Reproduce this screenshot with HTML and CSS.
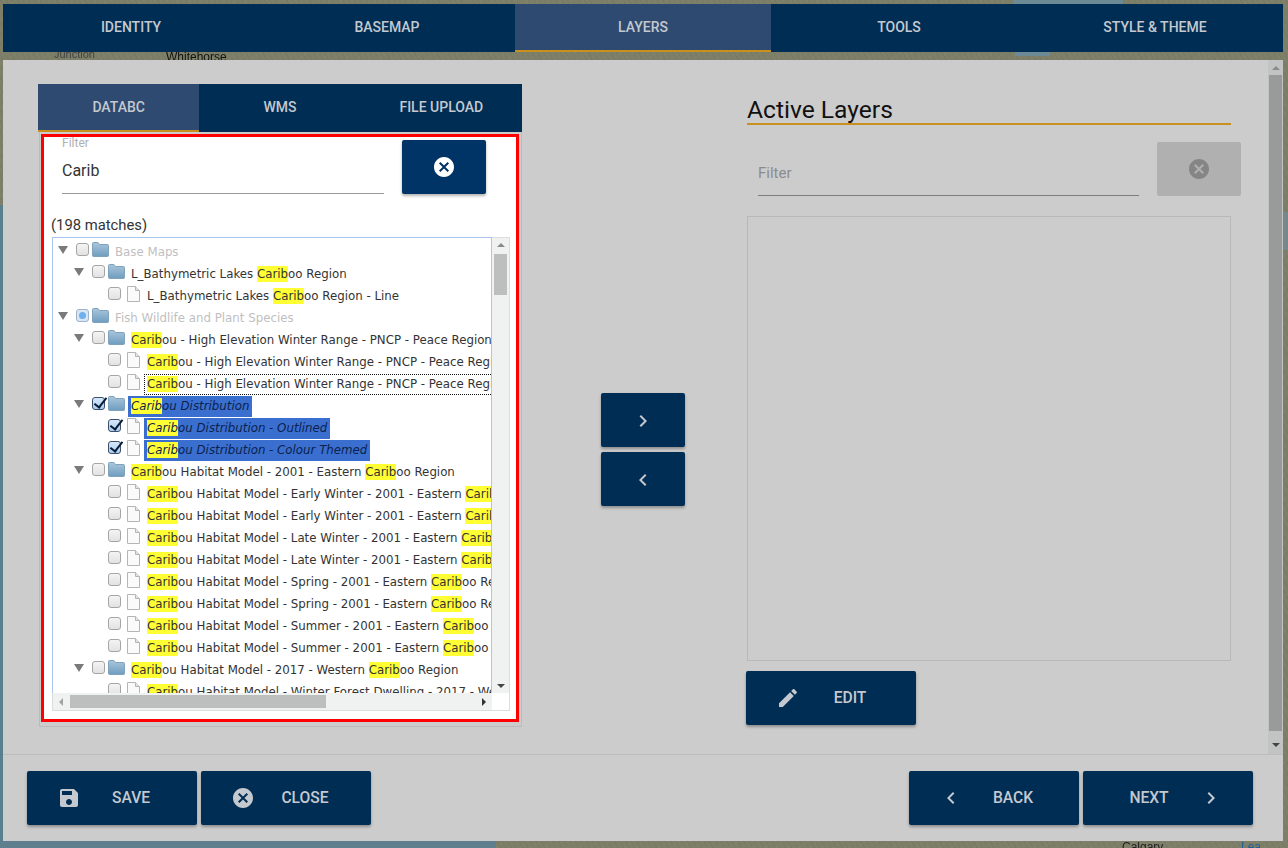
FILE: index.html
```html
<!DOCTYPE html>
<html lang="en">

<head>
  <meta charset="UTF-8">
  <title>Layers</title>
  <link rel="stylesheet" href="styles.css">
</head>

<body>

  <svg class="defs" width="0" height="0">
    <defs>
      <linearGradient id="folderFill" x1="0" y1="0" x2="0" y2="1">
        <stop offset="0" stop-color="#a9c6dc" />
        <stop offset="1" stop-color="#6f9dbf" />
      </linearGradient>
      <symbol id="i-cancel" viewBox="0 0 24 24">
        <path d="M12 2C6.47 2 2 6.47 2 12s4.47 10 10 10 10-4.47 10-10S17.53 2 12 2zm5 13.59L15.59 17 12 13.41 8.41 17 7 15.59 10.59 12 7 8.41 8.41 7 12 10.59 15.59 7 17 8.41 13.41 12 17 15.59z" />
      </symbol>
      <symbol id="i-save" viewBox="0 0 24 24">
        <path d="M17 3H5c-1.11 0-2 .9-2 2v14c0 1.1.89 2 2 2h14c1.1 0 2-.9 2-2V7l-4-4zm-5 16c-1.66 0-3-1.34-3-3s1.34-3 3-3 3 1.34 3 3-1.34 3-3 3zm3-10H5V5h10v4z" />
      </symbol>
      <symbol id="i-edit" viewBox="0 0 24 24">
        <path d="M3 17.25V21h3.75L17.81 9.94l-3.75-3.75L3 17.25zM20.71 7.04c.39-.39.39-1.02 0-1.41l-2.34-2.34c-.39-.39-1.02-.39-1.41 0l-1.83 1.83 3.75 3.75 1.83-1.83z" />
      </symbol>
      <symbol id="i-left" viewBox="0 0 24 24">
        <path d="M15.41 7.41L14 6l-6 6 6 6 1.41-1.41L10.83 12z" />
      </symbol>
      <symbol id="i-right" viewBox="0 0 24 24">
        <path d="M10 6L8.59 7.41 13.17 12l-4.58 4.59L10 18l6-6z" />
      </symbol>
      <symbol id="i-folder" viewBox="0 0 17 15">
        <path d="M.5 3V1.5q0-1 1-1h4.5l1.5 2h8q1 0 1 1v10q0 1-1 1h-14q-1 0-1-1z" fill="url(#folderFill)" stroke="#7fa3bd" />
      </symbol>
      <symbol id="i-page" viewBox="0 0 13 16">
        <path d="M.5.5h8l4 4v11H.5z" fill="#fafafa" stroke="#b5b5b5" />
        <path d="M8.5.5v4h4" fill="#e4e4e4" stroke="#b5b5b5" />
      </symbol>
    </defs>
  </svg>

  <div class="map">
    <span class="water lake-top"></span>
    <span class="water lake-under"></span>
    <span class="water water-left"></span>
    <span class="water water-bottom"></span>
    <span class="water water-right"></span>
    <span class="place place-junction">Junction</span>
    <span class="place place-whitehorse">Whitehorse</span>
    <span class="place place-calgary">Calgary</span>
    <span class="place place-lea">Lea</span>
  </div>

  <div class="page">
    <nav class="steps">
      <div class="step">IDENTITY</div>
      <div class="step">BASEMAP</div>
      <div class="step active">LAYERS</div>
      <div class="step">TOOLS</div>
      <div class="step">STYLE &amp; THEME</div>
    </nav>

    <div class="modal">
      <div class="modal-body">
        <div class="modal-content">

          <section class="col-left">
            <div class="tabs">
              <div class="tab active">DATABC</div>
              <div class="tab">WMS</div>
              <div class="tab">FILE UPLOAD</div>
            </div>

            <div class="tab-frame">
              <div class="tab-panel">
                <div class="filter-row">
                  <div class="field">
                    <span class="field-label">Filter</span>
                    <span class="field-value">Carib</span>
                  </div>
                  <button class="btn btn-clear"><svg class="icon"><use href="#i-cancel" /></svg></button>
                </div>

                <div class="matches">(198 matches)</div>

                <div class="tree">
                  <div class="tree-view">
                    <div class="node lv0"><i class="tri"></i><i class="cb"></i><svg class="folder"><use href="#i-folder" /></svg><span class="txt muted">Base Maps</span></div>
                    <div class="node lv1"><i class="tri"></i><i class="cb"></i><svg class="folder"><use href="#i-folder" /></svg><span class="txt">L_Bathymetric Lakes <mark>Carib</mark>oo Region</span></div>
                    <div class="node lv2"><i class="tri none"></i><i class="cb"></i><svg class="doc"><use href="#i-page" /></svg><span class="txt">L_Bathymetric Lakes <mark>Carib</mark>oo Region - Line</span></div>
                    <div class="node lv0"><i class="tri"></i><i class="cb part"></i><svg class="folder"><use href="#i-folder" /></svg><span class="txt muted">Fish Wildlife and Plant Species</span></div>
                    <div class="node lv1"><i class="tri"></i><i class="cb"></i><svg class="folder"><use href="#i-folder" /></svg><span class="txt"><mark>Carib</mark>ou - High Elevation Winter Range - PNCP - Peace Region</span></div>
                    <div class="node lv2"><i class="tri none"></i><i class="cb"></i><svg class="doc"><use href="#i-page" /></svg><span class="txt"><mark>Carib</mark>ou - High Elevation Winter Range - PNCP - Peace Region - Line</span></div>
                    <div class="node lv2"><i class="tri none"></i><i class="cb"></i><svg class="doc"><use href="#i-page" /></svg><span class="txt focus"><mark>Carib</mark>ou - High Elevation Winter Range - PNCP - Peace Region - Polygon</span></div>
                    <div class="node lv1"><i class="tri"></i><i class="cb on"></i><svg class="folder"><use href="#i-folder" /></svg><span class="txt sel"><mark>Carib</mark>ou Distribution</span></div>
                    <div class="node lv2"><i class="tri none"></i><i class="cb on"></i><svg class="doc"><use href="#i-page" /></svg><span class="txt sel"><mark>Carib</mark>ou Distribution - Outlined</span></div>
                    <div class="node lv2"><i class="tri none"></i><i class="cb on"></i><svg class="doc"><use href="#i-page" /></svg><span class="txt sel"><mark>Carib</mark>ou Distribution - Colour Themed</span></div>
                    <div class="node lv1"><i class="tri"></i><i class="cb"></i><svg class="folder"><use href="#i-folder" /></svg><span class="txt"><mark>Carib</mark>ou Habitat Model - 2001 - Eastern <mark>Carib</mark>oo Region</span></div>
                    <div class="node lv2"><i class="tri none"></i><i class="cb"></i><svg class="doc"><use href="#i-page" /></svg><span class="txt"><mark>Carib</mark>ou Habitat Model - Early Winter - 2001 - Eastern <mark>Carib</mark>oo Region</span></div>
                    <div class="node lv2"><i class="tri none"></i><i class="cb"></i><svg class="doc"><use href="#i-page" /></svg><span class="txt"><mark>Carib</mark>ou Habitat Model - Early Winter - 2001 - Eastern <mark>Carib</mark>oo Region</span></div>
                    <div class="node lv2"><i class="tri none"></i><i class="cb"></i><svg class="doc"><use href="#i-page" /></svg><span class="txt"><mark>Carib</mark>ou Habitat Model - Late Winter - 2001 - Eastern <mark>Carib</mark>oo Region</span></div>
                    <div class="node lv2"><i class="tri none"></i><i class="cb"></i><svg class="doc"><use href="#i-page" /></svg><span class="txt"><mark>Carib</mark>ou Habitat Model - Late Winter - 2001 - Eastern <mark>Carib</mark>oo Region</span></div>
                    <div class="node lv2"><i class="tri none"></i><i class="cb"></i><svg class="doc"><use href="#i-page" /></svg><span class="txt"><mark>Carib</mark>ou Habitat Model - Spring - 2001 - Eastern <mark>Carib</mark>oo Region</span></div>
                    <div class="node lv2"><i class="tri none"></i><i class="cb"></i><svg class="doc"><use href="#i-page" /></svg><span class="txt"><mark>Carib</mark>ou Habitat Model - Spring - 2001 - Eastern <mark>Carib</mark>oo Region</span></div>
                    <div class="node lv2"><i class="tri none"></i><i class="cb"></i><svg class="doc"><use href="#i-page" /></svg><span class="txt"><mark>Carib</mark>ou Habitat Model - Summer - 2001 - Eastern <mark>Carib</mark>oo Region</span></div>
                    <div class="node lv2"><i class="tri none"></i><i class="cb"></i><svg class="doc"><use href="#i-page" /></svg><span class="txt"><mark>Carib</mark>ou Habitat Model - Summer - 2001 - Eastern <mark>Carib</mark>oo Region</span></div>
                    <div class="node lv1"><i class="tri"></i><i class="cb"></i><svg class="folder"><use href="#i-folder" /></svg><span class="txt"><mark>Carib</mark>ou Habitat Model - 2017 - Western <mark>Carib</mark>oo Region</span></div>
                    <div class="node lv2"><i class="tri none"></i><i class="cb"></i><svg class="doc"><use href="#i-page" /></svg><span class="txt"><mark>Carib</mark>ou Habitat Model - Winter Forest Dwelling - 2017 - Western <mark>Carib</mark>oo Region</span></div>
                  </div>
                  <div class="vbar">
                    <i class="arrow up"></i>
                    <div class="vtrack"><div class="vthumb"></div></div>
                    <i class="arrow down"></i>
                  </div>
                  <div class="hbar">
                    <i class="arrow left"></i>
                    <div class="htrack"><div class="hthumb"></div></div>
                    <i class="arrow right"></i>
                  </div>
                  <div class="corner"></div>
                </div>
              </div>
            </div>
          </section>

          <section class="col-mid">
            <button class="btn btn-move"><svg class="icon"><use href="#i-right" /></svg></button>
            <button class="btn btn-move"><svg class="icon"><use href="#i-left" /></svg></button>
          </section>

          <section class="col-right">
            <h2 class="title">Active Layers</h2>
            <div class="active-filter">
              <div class="field-empty">Filter</div>
              <button class="btn btn-disabled"><svg class="icon"><use href="#i-cancel" /></svg></button>
            </div>
            <div class="active-list"></div>
            <button class="btn btn-wide"><svg class="icon"><use href="#i-edit" /></svg><span class="btn-text">EDIT</span></button>
          </section>

        </div>

        <div class="modal-scroll">
          <i class="arrow up"></i>
          <div class="modal-track"><div class="modal-thumb"></div></div>
          <i class="arrow down"></i>
        </div>
      </div>

      <footer class="modal-foot">
        <div class="foot-group">
          <button class="btn btn-wide"><svg class="icon"><use href="#i-save" /></svg><span class="btn-text">SAVE</span></button>
          <button class="btn btn-wide"><svg class="icon"><use href="#i-cancel" /></svg><span class="btn-text">CLOSE</span></button>
        </div>
        <div class="foot-group">
          <button class="btn btn-wide"><svg class="icon"><use href="#i-left" /></svg><span class="btn-text">BACK</span></button>
          <button class="btn btn-wide btn-rev"><span class="btn-text">NEXT</span><svg class="icon"><use href="#i-right" /></svg></button>
        </div>
      </footer>
    </div>
  </div>

</body>

</html>
```

FILE: styles.css
```css
* {
  box-sizing: border-box;
}

html,
body {
  margin: 0;
  height: 100%;
  overflow: hidden;
}

body {
  font-family: Roboto, "Liberation Sans", sans-serif;
  background-color: #7d7f68;
}

.defs {
  position: absolute;
}

/* map behind the dialog */
.map {
  position: fixed;
  top: 0;
  left: 0;
  right: 0;
  bottom: 0;
  background-color: #7d7f68;
  background-image:
    repeating-linear-gradient(63deg, rgba(60, 55, 35, 0.07) 0 1px, transparent 1px 5px),
    repeating-linear-gradient(-37deg, rgba(170, 170, 140, 0.07) 0 1px, transparent 1px 7px);
}

.water {
  position: absolute;
  background-color: #6c8a96;
}

.lake-top {
  left: 1013px;
  top: 0;
  width: 110px;
  height: 4px;
}

.lake-under {
  left: 1015px;
  top: 52px;
  width: 35px;
  height: 4px;
}

.water-left {
  left: 0;
  top: 205px;
  width: 3px;
  height: 643px;
  background-color: #5a7f8c;
}

.water-bottom {
  left: 0;
  top: 841px;
  width: 496px;
  height: 7px;
  background-color: #5f7f8f;
}

.water-right {
  left: 1283px;
  top: 212px;
  width: 5px;
  height: 38px;
  background-color: #75898c;
}

.place {
  position: absolute;
  font-family: "Liberation Sans", sans-serif;
  font-size: 11px;
  color: #222;
}

.place-junction {
  left: 54px;
  top: 48px;
  color: #444;
}

.place-whitehorse {
  left: 166px;
  top: 50px;
  font-size: 12px;
  color: #111;
}

.place-calgary {
  left: 1122px;
  top: 840px;
  font-size: 12px;
}

.place-lea {
  left: 1241px;
  top: 840px;
  font-size: 12px;
  color: #1d5f9c;
}

.page {
  position: relative;
  display: flex;
  flex-direction: column;
  gap: 8px;
  height: 848px;
  padding: 4px 5px 7px 3px;
}

/* top steps */
.steps {
  display: flex;
  height: 48px;
  background-color: #002d54;
}

.step {
  flex: 1;
  display: flex;
  align-items: center;
  justify-content: center;
  padding-bottom: 2px;
  font-size: 14px;
  font-weight: 500;
  color: #c4c9cf;
}

.step.active,
.tab.active {
  background-color: #2f4a70;
  border-bottom: 2px solid #c8901e;
  padding-bottom: 0;
}

/* dialog */
.modal {
  flex: 1;
  display: flex;
  flex-direction: column;
  background-color: #ccc;
}

.modal-body {
  display: flex;
  height: 695px;
  border-bottom: 1px solid #bdbdbd;
}

.modal-content {
  flex: 1;
  display: flex;
  padding: 24px 0 0 35px;
}

.modal-scroll {
  width: 15px;
  display: flex;
  flex-direction: column;
  align-items: center;
  background-color: #c2c3c3;
}

.modal-track {
  flex: 1;
  width: 13px;
  padding: 1px 0 12px;
}

.modal-thumb {
  height: 100%;
  background-color: #999a9a;
}

.modal-scroll .arrow.up {
  margin: 6px 0 4px;
}

.modal-scroll .arrow.down {
  margin: 0 0 7px;
}

.arrow {
  display: block;
  width: 0;
  height: 0;
  flex-shrink: 0;
  border-style: solid;
  border-color: transparent;
}

.arrow.up {
  border-width: 0 4px 4px;
  border-bottom-color: #8a8a8a;
}

.arrow.down {
  border-width: 4px 4px 0;
  border-top-color: #444;
}

.arrow.left {
  border-width: 4px 4px 4px 0;
  border-right-color: #a3a3a3;
}

.arrow.right {
  border-width: 4px 0 4px 4px;
  border-left-color: #333;
}

/* left column */
.col-left {
  width: 484px;
}

.tabs {
  display: flex;
  height: 48px;
  background-color: #002d54;
}

.tab {
  flex: 1;
  display: flex;
  align-items: center;
  justify-content: center;
  padding-bottom: 2px;
  font-size: 14px;
  font-weight: 500;
  color: #c4c9cf;
}

.tab-frame {
  height: 595px;
  padding: 2px 2px 4px 1px;
  margin-left: 1px;
  border-left: 1px solid #bbb;
  border-right: 1px solid #bbb;
  border-bottom: 1px solid #bbb;
}

.tab-panel {
  height: 100%;
  padding: 3px 6px 0 7px;
  background-color: #fff;
  border: 3px solid #f00;
}

.filter-row {
  display: flex;
  align-items: flex-start;
  gap: 18px;
  height: 57px;
  padding: 0 24px 0 11px;
}

.field {
  width: 322px;
  height: 54px;
  display: flex;
  flex-direction: column;
  border-bottom: 1px solid #9a9a9a;
}

.field-label {
  font-size: 12px;
  line-height: 12px;
  margin-top: -3px;
  color: #b0b0b0;
}

.field-value {
  font-size: 16px;
  line-height: 20px;
  margin-top: 12px;
  color: #333;
}

.matches {
  margin-top: 19px;
  height: 21px;
  font-size: 14.8px;
  line-height: 19px;
  color: #333;
}

/* tree */
.tree {
  display: grid;
  grid-template-columns: 440px 17px;
  grid-template-rows: 456px 17px;
  width: 458px;
  margin-left: 1px;
  border-right: 1px solid #ddd;
  border-bottom: 1px solid #ddd;
}

.tree-view {
  overflow: hidden;
  padding-top: 3px;
  border-top: 1px solid #a8c6ee;
  border-left: 1px solid #a8c6ee;
  border-right: 1px solid #a8c6ee;
  font-family: "DejaVu Sans", Verdana, sans-serif;
  font-size: 11.8px;
  color: #333;
}

.node {
  display: flex;
  align-items: center;
  height: 22px;
  white-space: nowrap;
}

.lv0 {
  padding-left: 5px;
}

.lv1 {
  padding-left: 21px;
}

.lv2 {
  padding-left: 37px;
}

.tri {
  width: 0;
  height: 0;
  margin: 0 8px 4px 0;
  flex-shrink: 0;
  border-style: solid;
  border-width: 8px 5px 0;
  border-color: #7a7a7a transparent transparent;
}

.tri.none {
  border-color: transparent;
}

.cb {
  position: relative;
  display: block;
  width: 13px;
  height: 13px;
  margin-bottom: 5px;
  flex-shrink: 0;
  border: 1px solid #a5a5a5;
  border-radius: 3px;
  background: linear-gradient(#f4f4f4, #e2e2e2);
}

.cb.part {
  background: #d8e6f4;
  border-color: #9db4cc;
}

.cb.part:after {
  content: "";
  position: absolute;
  left: 2px;
  top: 2px;
  width: 7px;
  height: 7px;
  border-radius: 50%;
  background-color: #6fb0ee;
}

.cb.on {
  background: linear-gradient(#d5e8fa, #a9cdf0);
  border-color: #3b4f6b;
}

.cb.on:after {
  content: "";
  position: absolute;
  left: 4px;
  top: -3px;
  width: 5px;
  height: 11px;
  border-right: 2px solid #0a1a33;
  border-bottom: 2px solid #0a1a33;
  transform: rotate(38deg);
}

.folder {
  width: 17px;
  height: 15px;
  margin: 0 0 5px 3px;
  flex-shrink: 0;
}

.doc {
  width: 13px;
  height: 16px;
  margin: 0 1px 5px 6px;
  flex-shrink: 0;
}

.txt {
  display: block;
  height: 21px;
  line-height: 20px;
  margin-left: 3px;
  padding: 0 3px;
}

.muted {
  color: #bfbfbf;
}

.sel {
  background-color: #3a6fd0;
  font-style: italic;
  color: #0b1f4d;
}

.focus {
  outline: 1px dotted #111;
  outline-offset: -1px;
}

mark {
  display: inline-block;
  height: 16px;
  line-height: 16px;
  background-color: #ff3;
  color: inherit;
}

.vbar {
  display: flex;
  flex-direction: column;
  align-items: center;
  background-color: #f0f1f1;
  border-top: 1px solid #ddd;
}

.vbar .arrow.up {
  margin: 5px 0 7px;
}

.vtrack {
  flex: 1;
}

.vthumb {
  width: 13px;
  height: 41px;
  background-color: #bdbfbf;
}

.vbar .arrow.down {
  margin-bottom: 5px;
}

.hbar {
  display: flex;
  align-items: center;
  padding: 0 6px;
  background-color: #f0f1f1;
  border-left: 1px solid #ddd;
}

.htrack {
  flex: 1;
  padding: 0 0 0 7px;
}

.hthumb {
  width: 256px;
  height: 13px;
  background-color: #bdbfbf;
}

.corner {
  background-color: #fff;
}

/* middle */
.col-mid {
  width: 84px;
  margin-left: 79px;
  display: flex;
  flex-direction: column;
  gap: 5px;
  padding-top: 309px;
}

/* right column */
.col-right {
  width: 495px;
  margin-left: 62px;
  padding-top: 10px;
}

.title {
  width: 484px;
  height: 31px;
  margin: 0;
  padding-top: 1px;
  font-size: 24.6px;
  font-weight: 400;
  line-height: 30px;
  color: #111;
  border-bottom: 2px solid #c8901e;
}

.active-filter {
  display: flex;
  align-items: flex-start;
  gap: 18px;
  margin-top: 17px;
  padding-left: 11px;
}

.field-empty {
  width: 381px;
  height: 54px;
  padding-top: 22px;
  font-size: 15px;
  line-height: 19px;
  color: #8c8c8c;
  border-bottom: 1px solid #7d7d7d;
}

.active-list {
  width: 484px;
  height: 445px;
  margin-top: 20px;
  margin-bottom: 10px;
  border: 1px solid #b8b8b8;
}

.col-right .btn-wide {
  margin-left: -1px;
}

/* buttons */
.btn {
  display: flex;
  align-items: center;
  justify-content: center;
  height: 54px;
  padding: 0;
  border: none;
  border-radius: 2px;
  font-family: inherit;
  font-size: 15.6px;
  font-weight: 500;
  color: #c4c9cf;
  background-color: #002d54;
  box-shadow: 0 2px 3px rgba(0, 0, 0, 0.3);
}

.icon {
  width: 24px;
  height: 24px;
  flex-shrink: 0;
  fill: currentColor;
}

.btn-clear {
  width: 84px;
  background-color: #003366;
  color: #fff;
}

.btn-disabled {
  width: 84px;
  background-color: #b0b0b0;
  color: #858585;
  box-shadow: none;
}

.btn-move {
  width: 84px;
  padding-top: 2px;
}

.btn-wide {
  width: 170px;
  padding: 0 16px 0 30px;
}

.btn-rev {
  padding: 0 30px 0 16px;
}

.btn-text {
  flex: 1;
  text-align: center;
}

/* footer */
.modal-foot {
  flex: 1;
  display: flex;
  justify-content: space-between;
  padding: 16px 30px 0 24px;
}

.foot-group {
  display: flex;
  gap: 4px;
}
```
